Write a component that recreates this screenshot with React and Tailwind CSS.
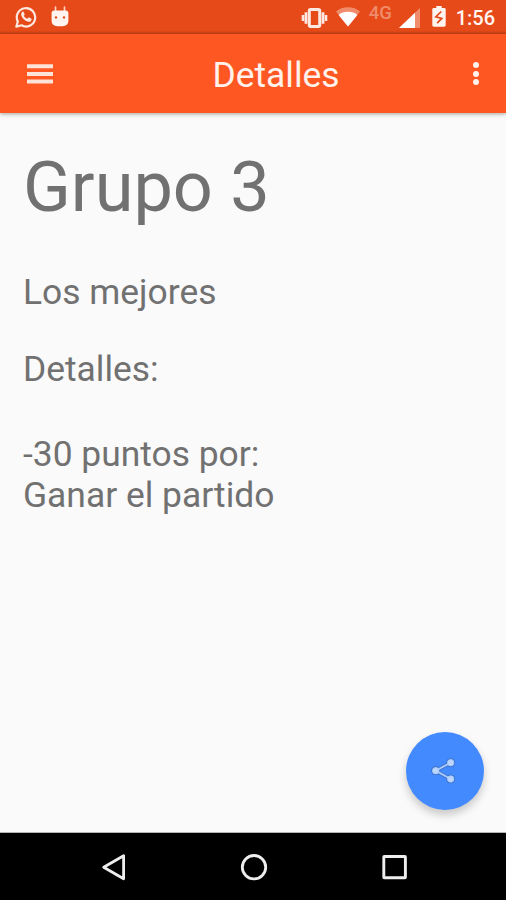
import React from "react";

const WhatsappIcon = () => (
  <svg width="22" height="22" viewBox="0 0 22 22" fill="none">
    <path d="M1.3 20.700l1.500-5.200A9.200 9.200 0 1 1 6.400 19.300z" stroke="#fde9e1" strokeWidth="2.200" strokeLinejoin="round" />
    <path
      d="M7.200 5.900c.5-.5 1.200-.4 1.500.2l.9 2.100c.1.500 0 .8-.8 1.600.8 1.500 1.800 2.400 3.300 3l1.100-1.100c.3-.3.6-.4 1-.2l2 1c.6.3.5 2.100-.7 2.900-1.400.8-3.400.3-5.500-1.100-2.100-1.400-3.500-3.500-3.800-5.200-.2-1.400.3-2.500 1-3.200z"
      fill="#fde9e1"
    />
  </svg>
);

const BugIcon = () => (
  <svg width="18" height="21" viewBox="0 0 18 21">
    <path d="M4.500 1v5M13.500 1v5" stroke="#fbcdbd" strokeWidth="1.700" strokeLinecap="round" />
    <path d="M3.300 4.600h11.400c1.800 0 2.700 1 2.700 2.700v7.200c0 3.600-2.300 5.700-5.800 5.700H6.400c-3.500 0-5.800-2.100-5.800-5.700V7.300c0-1.700.9-2.700 2.700-2.700z" fill="#fff4ef" />
    <circle cx="5" cy="11.400" r="1.200" fill="#e64a19" />
    <circle cx="13" cy="11.400" r="1.200" fill="#e64a19" />
  </svg>
);

const VibrateIcon = () => (
  <svg width="28" height="20" viewBox="0 0 28 20">
    <rect x="9.300" y="1.500" width="10.400" height="17" rx="1.200" fill="none" stroke="#fde9e1" strokeWidth="3" />
    <path d="M6 4.200v11.600M23 4.200v11.600" stroke="#fde9e1" strokeWidth="2.800" />
    <path d="M3 7v6M26 7v6" stroke="#fde9e1" strokeWidth="2.600" />
  </svg>
);

const WifiIcon = () => (
  <svg width="24" height="20" viewBox="0 0 24 20">
    <path d="M12 19.500L0 4.500C3.300 1.800 7.400.3 12 .3S20.700 1.800 24 4.500z" fill="#f08c6b" />
    <path d="M12 19.500L2.600 8c2.600-2.100 5.700-3.200 9.400-3.200S18.800 5.900 21.400 8z" fill="#fff" />
  </svg>
);

const SignalIcon = () => (
  <svg width="21" height="20" viewBox="0 0 21 20">
    <path d="M0 20L21 0v20z" fill="#f08c6b" />
    <path d="M0 20L16 4.800V20z" fill="#fff" />
  </svg>
);

const BatteryIcon = () => (
  <svg width="14" height="21" viewBox="0 0 14 21">
    <path d="M4.300 0h5.400v2H12c1.100 0 1.700.5 1.700 1.500V19c0 1-.6 1.700-1.700 1.700H2C.9 20.700.3 20 .3 19V3.500C.3 2.500.9 2 2 2h2.300z" fill="#fff4ef" />
    <path d="M9.300 5.500L3.800 10.800l6 1.600-4.700 4.800" fill="none" stroke="#e64a19" strokeWidth="1.700" />
  </svg>
);

const StatusBar = () => (
  <div className="relative h-[34px] shrink-0 bg-[#e64a19]">
    <div className="flex h-full items-start pl-[15px] pt-[6px]">
      <WhatsappIcon />
      <div className="ml-[14px]">
        <BugIcon />
      </div>
      <div className="ml-auto flex items-start pr-[11px]">
        <div className="pt-[2px]"><VibrateIcon /></div>
        <div className="ml-[8px] pt-[1px]"><WifiIcon /></div>
        <span className="ml-[9px] mt-[-2px] w-[24px] whitespace-nowrap text-[18.500px] font-medium leading-[18px] text-[#f08c6b]">4G</span>
        <div className="ml-[6px] pt-[2px]"><SignalIcon /></div>
        <div className="ml-[12px]"><BatteryIcon /></div>
        <span className="ml-[10px] mt-[1px] text-[20px] font-medium leading-[22px] text-[#fff4ef]">1:56</span>
      </div>
    </div>
    <div className="absolute inset-x-0 bottom-0 h-[3px] bg-gradient-to-b from-transparent to-black/15" />
  </div>
);

const Toolbar = () => (
  <header className="relative z-10 flex h-[79px] shrink-0 items-center bg-[#ff5722] pl-[27px] pr-[27px] shadow-[0_1px_4px_rgba(0,0,0,0.35)]">
    <svg width="26" height="20" viewBox="0 0 26 20" fill="#ffe3d8" aria-label="Menu">
      <path d="M0 .3h26v4H0zM0 8h26v4H0zM0 15.600h26v4H0z" />
    </svg>
    <h1 className="ml-[159.500px] mt-[4px] text-[35.400px] leading-[41px] text-[#fff1eb]">Detalles</h1>
    <button className="ml-auto flex flex-col gap-[2.500px]" aria-label="Opciones">
      <span className="size-[6px] rounded-full bg-[#fff1eb]" />
      <span className="size-[6px] rounded-full bg-[#fff1eb]" />
      <span className="size-[6px] rounded-full bg-[#fff1eb]" />
    </button>
  </header>
);

const ShareIcon = () => (
  <svg width="28" height="28" viewBox="0 0 28 28">
    <g stroke="#3a6fc4" fill="#3a6fc4">
      <path d="M19.700 5.700L4.700 13.700l15 8.300" fill="none" strokeWidth="3.600" />
      <circle cx="19.700" cy="5.700" r="4" />
      <circle cx="4.700" cy="13.700" r="4" />
      <circle cx="19.700" cy="22" r="4" />
    </g>
    <g stroke="#a9c9fb" fill="#bcd6ff">
      <path d="M19.700 5.700L4.700 13.700l15 8.300" fill="none" strokeWidth="2" />
      <circle cx="19.700" cy="5.700" r="3.200" />
      <circle cx="4.700" cy="13.700" r="3.200" />
      <circle cx="19.700" cy="22" r="3.200" />
    </g>
  </svg>
);

const NavBar = () => (
  <nav className="flex h-[67px] shrink-0 items-center bg-black pl-[101px] text-[#eeeeee]">
    <svg width="26" height="30" viewBox="0 0 26 30" fill="none">
      <path d="M2.700 15.300L22.600 3.800v23z" stroke="currentColor" strokeWidth="2.800" strokeLinejoin="round" />
    </svg>
    <svg className="ml-[112px]" width="30" height="30" viewBox="0 0 30 30" fill="none">
      <circle cx="15" cy="15.200" r="11.700" stroke="currentColor" strokeWidth="2.800" />
    </svg>
    <svg className="ml-[111px]" width="30" height="30" viewBox="0 0 30 30" fill="none">
      <rect x="3.800" y="4.500" width="21.600" height="21.200" rx="0.500" stroke="currentColor" strokeWidth="2.900" />
    </svg>
  </nav>
);

export default function App() {
  return (
    <div className="flex h-[900px] w-[506px] flex-col overflow-hidden bg-[#fafafa] font-['Roboto',sans-serif]">
      <StatusBar />
      <Toolbar />
      <main className="relative flex-1 border-b border-[#b5b5b5] px-[23px] pt-[33px] text-[35.400px] leading-[41px] text-[#717171]">
        <h2 className="text-[70.280px] leading-[82px]">Grupo 3</h2>
        <p className="mt-[44px]">Los mejores</p>
        <p className="mt-[36px]">Detalles:</p>
        <p className="mt-[44px]">
          -30 puntos por:
          <br />
          Ganar el partido
        </p>
        <button
          className="absolute bottom-[22px] right-[22px] flex size-[78px] items-center justify-center rounded-full bg-[#448aff] shadow-[0_5px_8px_rgba(0,0,0,0.2)]"
          aria-label="Compartir"
        >
          <ShareIcon />
        </button>
      </main>
      <NavBar />
    </div>
  );
}
